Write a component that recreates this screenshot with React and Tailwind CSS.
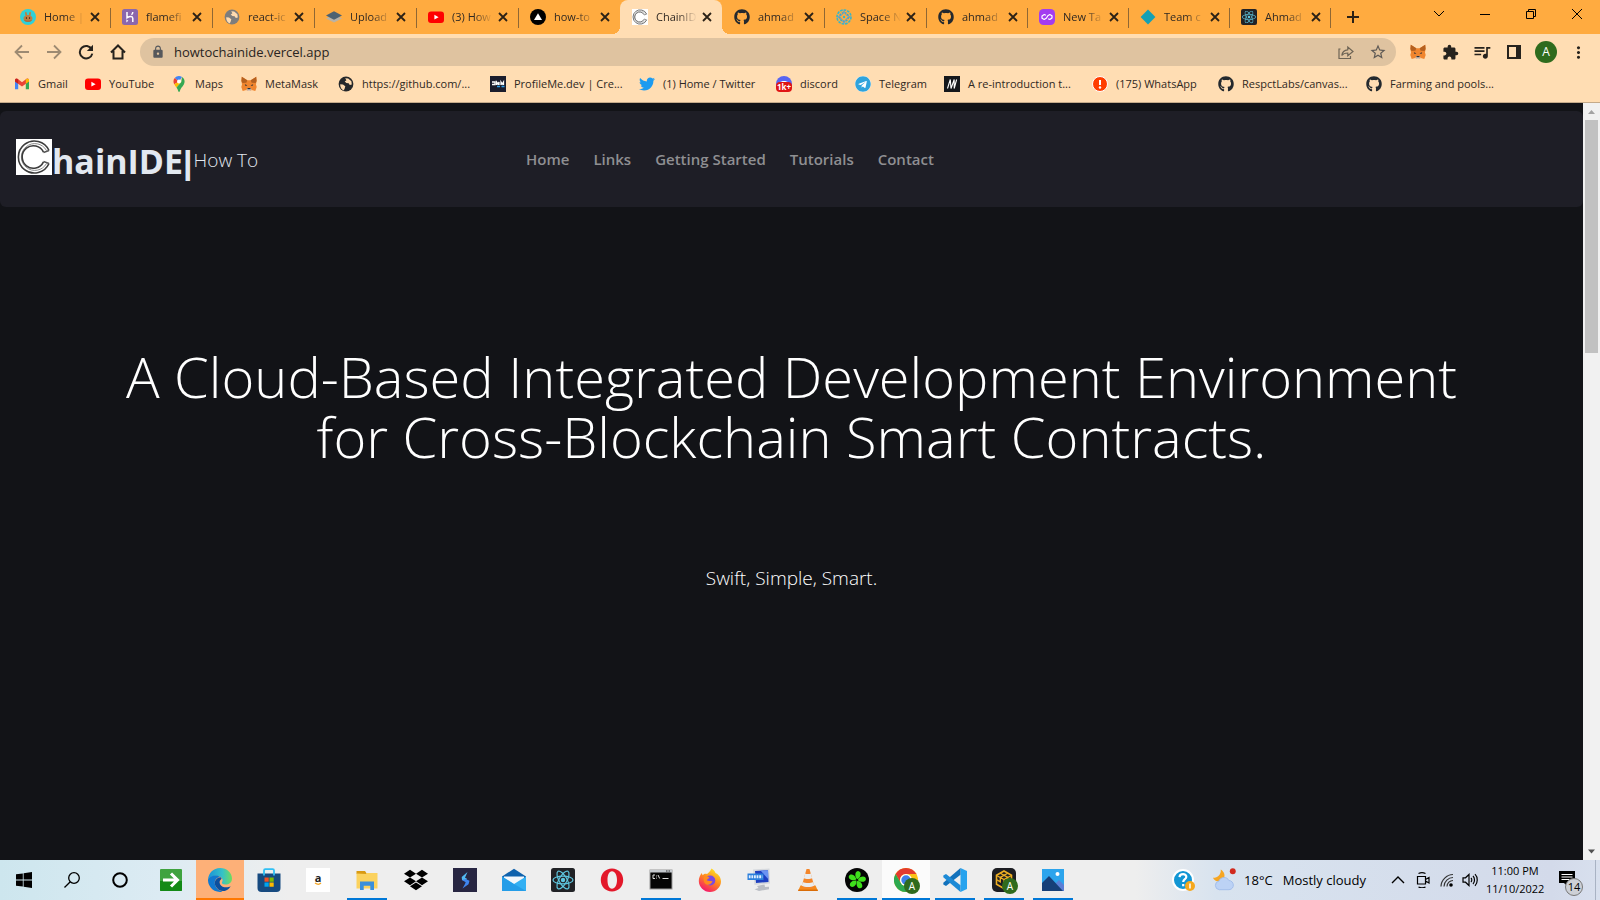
import React from "react";
import { FaGithub, FaTwitter, FaTelegram, FaDropbox, FaReact } from "react-icons/fa";
import { MdExtension, MdQueueMusic, MdLock, MdStarBorder, MdMoreVert } from "react-icons/md";

/* ---------- favicons ---------- */
const Svg = ({ s = 16, v = "0 0 16 16", children, className = "" }) => (
  <svg width={s} height={s} viewBox={v} fill="none" aria-hidden="true" className={"shrink-0 " + className}>
    {children}
  </svg>
);

const Pancake = () => (
  <Svg>
    <circle cx="8" cy="8" r="8" fill="#2fd0d8" />
    <path d="M5.800 2.800c.8 0 1.100 1.600 1.300 3.200h1.800c.2-1.600.5-3.200 1.300-3.200 1 0 .8 2.200.3 3.900 1.200.6 2 1.500 2 2.700 0 2.100-2 3.400-4.500 3.400S3.500 11.500 3.500 9.400c0-1.200.8-2.100 2-2.700-.5-1.700-.7-3.900.3-3.900Z" fill="#c07d42" />
    <path d="M6.400 8.200v1.700M9.600 8.200v1.700" stroke="#4a2b18" />
    <path d="M4.500 11.500c1.400 1 5.600 1 7 0" stroke="#a3683a" />
  </Svg>
);
const Heroku = () => (
  <Svg>
    <rect width="16" height="16" rx="2.500" fill="#8b67ad" />
    <path d="M5 3v5.800c3-1.800 5.800-1.700 5.800.6V13M10.800 3c0 1.200-.5 2-1.300 2.800" stroke="#fff" strokeWidth="1.500" />
    <path d="M4.400 10.200v3.200l1.900-1.600-1.900-1.600Z" fill="#fff" />
  </Svg>
);
const Globe = ({ color = "#7d7d7d" }) => (
  <Svg>
    <circle cx="8" cy="8" r="7.400" fill={color} />
    <path d="M2.200 8.200 5 8.600l2.300 1.600-.6 2.200-1 2.200C3.600 13.500 2 11.200 2.200 8.200ZM7.200 2.200l3 .2 3.200 2.800.4 3.400-2 .5-1.200-1.900-2.200-.2-1.700-1.500 1.700-1.300-1.200-2Z" fill="#ffdbb0" />
  </Svg>
);
const Layers = () => (
  <Svg>
    <path d="M8 5.400 16 9.400 8 13.500 0 9.400Z" fill="#b9b2a6" />
    <path d="M8 2.200 16 6.500 8 10.800 0 6.500Z" fill="#4d6272" />
  </Svg>
);
const YouTube = () => (
  <Svg>
    <rect y="2.500" width="16" height="11.500" rx="3" fill="#f00" />
    <path d="M6.400 5.800v4.800l4.200-2.400Z" fill="#fff" />
  </Svg>
);
const Vercel = () => (
  <Svg>
    <circle cx="8" cy="8" r="8" fill="#000" />
    <path d="M8 4.200 12 11H4Z" fill="#fff" />
  </Svg>
);
const ChainC = ({ s = 16 }) => (
  <Svg s={s} v="0 0 36 36">
    <rect width="36" height="36" fill="#fff" />
    <path d="M33 11.500A16 16 0 1 0 33 24.500" stroke="#3c3c3c" strokeWidth="1.600" />
    <path d="M30.500 11.500A13.400 13.400 0 1 0 30.500 24.500" stroke="#8a8a8a" strokeWidth="1" />
    <path d="M27.500 13.200A11.200 11.200 0 1 0 27.500 22.800" stroke="#3c3c3c" strokeWidth="1.600" />
    <path d="M27.500 13.500 33 11.500M27.500 22.500 33 24.500" stroke="#555" strokeWidth="1.400" />
  </Svg>
);
const GitHub = () => <FaGithub size={16} color="#24292e" aria-hidden="true" className="shrink-0" />;
const Space = () => (
  <Svg>
    <circle cx="8" cy="8" r="7" stroke="#35b7c9" strokeWidth="1.600" strokeDasharray="2.600 1" />
    <circle cx="8" cy="8" r="4.300" stroke="#3aa9c4" strokeWidth="1.600" strokeDasharray="2 .9" />
    <path d="m8 1.500 2 4.500 4.500 2-4.500 2-2 4.500L6 10 1.500 8 6 6Z" stroke="#5a9ed6" strokeWidth=".8" />
    <circle cx="8" cy="8" r="1.200" fill="#35b7c9" />
  </Svg>
);
const Polygon = () => (
  <Svg>
    <rect width="16" height="16" rx="4.500" fill="#a33cf0" />
    <path d="M7 6.200 5.300 5.500 3 7v2.300l2.200 1.200 2.300-1.500 1.300-2.200 2-1.300L13 6.800v2.300l-2.200 1.400-1.700-.8" stroke="#fff" strokeWidth="1.200" strokeLinejoin="round" />
  </Svg>
);
const Diamond = () => (
  <Svg>
    <path d="M8 .6 15.400 8 8 15.400.6 8Z" fill="#15a0b4" />
  </Svg>
);
const ReactIcon = () => (
  <span className="flex size-4 shrink-0 items-center justify-center rounded-xs bg-[#212226]">
    <FaReact size={14} color="#5fc6df" aria-hidden="true" />
  </span>
);
const Gmail = () => (
  <Svg>
    <path d="M1 4v9.300h3.200V7.500Z" fill="#4285f4" />
    <path d="M15 4v9.300h-3.200V7.500Z" fill="#34a853" />
    <path d="M1 4.200c0-1.600 1.700-2.200 2.800-1.300L8 6.200l4.200-3.300c1.100-.9 2.800-.3 2.800 1.300v1.200L8 10.600 1 5.400Z" fill="#ea4335" />
    <path d="M1 4v1.400l3.200 2.400V3.200C2.900 2.200 1 2.700 1 4Z" fill="#c5221f" />
    <path d="M15 4v1.400l-3.200 2.400V3.200C13.100 2.200 15 2.700 15 4Z" fill="#fbbc04" />
  </Svg>
);
const Maps = () => (
  <Svg>
    <path d="M8 0a5.500 5.500 0 0 0-4.300 2L8 5.500 11 1c-.9-.6-1.900-1-3-1Z" fill="#4285f4" />
    <path d="M3.700 2C2 4 2.300 6.400 3.200 8.200L8 5.500Z" fill="#ea4335" />
    <path d="M3.200 8.200c.6 1.200 1.500 2.200 2.300 3.400L10.500 6 8 5.500Z" fill="#fbbc04" />
    <path d="M11 1c3 2 3.100 5 1.800 7.400C11.500 10.800 9.500 12 8.800 15.300c-.2.900-1.300.9-1.500 0-.4-1.500-1-2.600-1.800-3.700L10.300 6Z" fill="#34a853" />
    <circle cx="8" cy="5.400" r="2" fill="#fff" />
  </Svg>
);
const Fox = () => (
  <Svg>
    <path d="M.8.800 6.300 4.200h3.400L15.200.8l.4 4.200-.6 3.400.7 2.500-1.400 4-3.600-1-1.300 1.100H6.600l-1.300-1.100-3.600 1-1.400-4L1 8.400.4 5Z" fill="#f0852e" />
    <path d="M.8.800 6.300 4.200l-.9 2.500L1.400 7 .4 5ZM15.200.8 9.700 4.200l.9 2.500 4 .3 1-2Z" fill="#b5601f" />
    <path d="m3.800 8.200 2.600 1.100-1.800.8ZM12.200 8.200 9.600 9.300l1.800.8Z" fill="#2b3038" />
    <path d="m5.300 13.200 1.500-1.300h2.400l1.500 1.300L9.400 15H6.600Z" fill="#d9c4b4" />
    <path d="M6.600 12h2.800l.3 1.200H6.300Z" fill="#2b3038" />
  </Svg>
);
const ProfileMe = () => (
  <Svg>
    <rect width="16" height="16" fill="#1b1d2c" />
    <path d="M2 6h3v2.500H2M6.500 9V6l1.500 2 1-2v3M11 9V6l1.200 2L13.500 6v3" stroke="#fff" strokeWidth="1.300" />
    <path d="M7 10.500h3M11.500 10.500h3" stroke="#2f9fe8" strokeWidth="1.400" />
  </Svg>
);
const Twitter = () => <FaTwitter size={16} color="#1d9bf0" aria-hidden="true" className="shrink-0" />;
const Discord = () => (
  <span className="relative size-4 shrink-0">
    <Svg>
      <circle cx="8" cy="8" r="8" fill="#5865f2" />
      <path d="M4 6.500c1-2 7-2 8 0Z" fill="#fff" />
    </Svg>
    <span className="absolute inset-x-0 bottom-0 h-[10px] rounded-sm bg-[#e01414] text-center text-[8px] leading-[10px] font-bold text-white">1k+</span>
  </span>
);
const Telegram = () => (
  <span className="flex size-4 shrink-0 items-center rounded-full bg-white">
    <FaTelegram size={16} color="#2fa3dc" aria-hidden="true" />
  </span>
);
const MIcon = () => (
  <Svg>
    <rect width="16" height="16" fill="#15171b" />
    <path d="M3.500 12.500 6.300 3.500 7 12.500 10.200 3.500V12.500M10.200 12.500 12.600 3.500" stroke="#fff" strokeWidth="1.100" />
  </Svg>
);
const Alert = () => (
  <Svg>
    <circle cx="8" cy="8" r="7.500" fill="#ff3d00" stroke="#fff" />
    <path d="M8 4v5" stroke="#fff" strokeWidth="2" />
    <circle cx="8" cy="11.500" r="1.200" fill="#fff" />
  </Svg>
);

/* ---------- tab strip ---------- */
const tabs = [
  { t: "Home |", i: <Pancake /> },
  { t: "flamefi", i: <Heroku /> },
  { t: "react-ic", i: <Globe /> },
  { t: "Upload", i: <Layers /> },
  { t: "(3) How", i: <YouTube /> },
  { t: "how-to", i: <Vercel /> },
  { t: "ChainID", i: <ChainC />, active: true },
  { t: "ahmad", i: <GitHub /> },
  { t: "Space N", i: <Space /> },
  { t: "ahmad", i: <GitHub /> },
  { t: "New Ta", i: <Polygon /> },
  { t: "Team c", i: <Diamond /> },
  { t: "Ahmad", i: <ReactIcon /> },
];

function Tab({ t, i, active, sep, narrow }) {
  return (
    <div className={`relative flex h-[34px] shrink-0 items-center pl-3 ${narrow ? "w-[101px]" : "w-[102px]"} ${active ? "rounded-t-lg bg-[#ffddb3]" : ""}`}>
      {active && (
        <>
          <span className="absolute bottom-0 -left-2 size-2 bg-[radial-gradient(circle_at_0_0,transparent_8px,#ffddb3_8px)]" />
          <span className="absolute -right-2 bottom-0 size-2 bg-[radial-gradient(circle_at_100%_0,transparent_8px,#ffddb3_8px)]" />
        </>
      )}
      {i}
      <span className="ml-2 w-[43px] text-[11px] leading-4 whitespace-nowrap [mask-image:linear-gradient(to_right,#000_50%,transparent_95%)]">{t}</span>
      <button aria-label={"Close " + t} className="flex size-4 items-center justify-center">
        <Svg s={10} v="0 0 10 10">
          <path d="m1 1 8 8M9 1 1 9" stroke="#2b2116" strokeWidth="1.800" />
        </Svg>
      </button>
      {sep && <span className="absolute top-2 -right-px h-5 w-px bg-[#8f6734]" />}
    </div>
  );
}

function WinButton({ label, children }) {
  return (
    <button aria-label={label} className="flex h-7 w-[46px] items-center justify-center">
      <Svg s={12} v="0 0 12 12">{children}</Svg>
    </button>
  );
}

function TabStrip() {
  return (
    <header className="flex bg-[#ffab40] pl-2">
      {tabs.map((tab, n) => (
        <Tab key={n} {...tab} narrow={n > 8} sep={!tab.active && !tabs[n + 1]?.active} />
      ))}
      <button aria-label="New tab" className="ml-[11px] flex w-6 items-center justify-center">
        <Svg s={12} v="0 0 12 12">
          <path d="M6 0v12M0 6h12" stroke="#2b2116" strokeWidth="2" />
        </Svg>
      </button>
      <div className="ml-auto flex">
        <WinButton label="Search tabs"><path d="m1 3 5 5 5-5" stroke="#000" /></WinButton>
        <WinButton label="Minimise"><path d="M1 6.500h10" stroke="#000" /></WinButton>
        <WinButton label="Restore"><path d="M1.500 3.500h7v7h-7ZM3.500 3.500v-2h7v7h-2" stroke="#000" /></WinButton>
        <WinButton label="Close window"><path d="m1 1 10 10M11 1 1 11" stroke="#000" /></WinButton>
      </div>
    </header>
  );
}

/* ---------- toolbar ---------- */
function Tool({ label, children }) {
  return (
    <button type="button" aria-label={label} className="flex h-7 w-8 items-center justify-center text-[#26221d]">
      {children}
    </button>
  );
}

function Toolbar() {
  return (
    <div className="flex bg-[#ffddb3] pt-1 pl-[6px]">
      <Tool label="Back"><Svg><path d="M15 8H2M8 1.500 1.500 8 8 14.500" stroke="#9d8a72" strokeWidth="1.800" /></Svg></Tool>
      <Tool label="Forward"><Svg><path d="M1 8h13M8 1.500 14.500 8 8 14.500" stroke="#9d8a72" strokeWidth="1.800" /></Svg></Tool>
      <Tool label="Reload">
        <Svg><path d="M13.700 5.200A6.300 6.300 0 1 0 14.300 9.600" stroke="currentColor" strokeWidth="2" /><path d="M15 .800v6.200H8.800Z" fill="currentColor" /></Svg>
      </Tool>
      <Tool label="Home page"><Svg><path d="M1 8.500 8 1.500l7 7M3.500 7v7.500h9V7" stroke="currentColor" strokeWidth="2" /></Svg></Tool>
      <form className="ml-[6px] flex h-7 flex-1 items-center rounded-full bg-[#dfc3a0] pr-[2px] pl-[11px]">
        <MdLock size={14} color="#56585c" aria-hidden="true" />
        <input aria-label="Address" defaultValue="howtochainide.vercel.app" className="ml-[9px] min-w-0 flex-1 bg-transparent text-[13px] leading-5 text-[#292421] outline-none" />
        <Tool label="Share">
          <Svg><path d="M2.500 5H1v9.500h11.500V12" stroke="#6e6455" strokeWidth="1.200" /><path d="M3.800 11.500c.5-4 2.500-5.500 6-5.700V3l5.200 4.500-5.200 4.200V9c-3 0-4.700.7-6 2.500Z" stroke="#6e6455" strokeWidth="1.200" /></Svg>
        </Tool>
        <Tool label="Bookmark this page"><MdStarBorder size={18} color="#5f5a55" /></Tool>
      </form>
      <div className="flex px-[6px]">
        <Tool label="MetaMask"><Fox /></Tool>
        <Tool label="Extensions"><MdExtension size={17} /></Tool>
        <Tool label="Media controls"><MdQueueMusic size={20} /></Tool>
        <Tool label="Side panel"><Svg><path d="M2 2h12v12H2Z" stroke="currentColor" strokeWidth="2" /><path d="M10 2h4v12h-4Z" fill="currentColor" /></Svg></Tool>
        <Tool label="Profile"><span className="size-[22px] rounded-full bg-[#2f6b1d] text-[12px] leading-[22px] text-white">A</span></Tool>
        <Tool label="Menu"><MdMoreVert size={19} /></Tool>
      </div>
    </div>
  );
}

const bookmarks = [
  ["Gmail", <Gmail />, "w-[71px]"],
  ["YouTube", <YouTube />, "w-[86px]"],
  ["Maps", <Maps />, "w-[70px]"],
  ["MetaMask", <Fox />, "w-[97px]"],
  ["https://github.com/...", <Globe color="#26282b" />, "w-[152px]"],
  ["ProfileMe.dev | Cre...", <ProfileMe />, "w-[149px]"],
  ["(1) Home / Twitter", <Twitter />, "w-[137px]"],
  ["discord", <Discord />, "w-[79px]"],
  ["Telegram", <Telegram />, "w-[89px]"],
  ["A re-introduction t...", <MIcon />, "w-[148px]"],
  ["(175) WhatsApp", <Alert />, "w-[126px]"],
  ["RespctLabs/canvas...", <GitHub />, "w-[148px]"],
  ["Farming and pools...", <GitHub />, "w-[148px]"],
];

function Bookmarks() {
  return (
    <nav aria-label="Bookmarks" className="flex h-[37px] border-b border-[#c4aa8a] bg-[#ffddb3] pb-[1px] pl-[14px]">
      {bookmarks.map(([t, i, w]) => (
        <a key={t} href="#" className={`flex shrink-0 items-center gap-2 text-[11px] leading-4 whitespace-nowrap text-[#2f2822] ${w}`}>
          {i}
          {t}
        </a>
      ))}
    </nav>
  );
}

/* ---------- page ---------- */
function Page() {
  return (
    <div className="flex flex-1 bg-[#121317]">
      <main className="flex min-w-0 flex-1 flex-col pt-2">
        <div className="flex h-24 items-center rounded-md bg-[#1e1e26] px-4">
          <a href="#" className="flex w-[510px] items-center pt-1 text-[#e2e8f0]">
            <span className="pb-2"><ChainC s={36} /></span>
            <span className="text-[34px] leading-10 font-bold">
              hainIDE<span className="font-['Liberation_Sans']">|</span>
            </span>
            <span className="pb-[2px] pl-[1px] text-[19px] leading-7 font-light">How To</span>
          </a>
          <nav aria-label="Site" className="flex gap-6 text-[15px] leading-6 font-semibold text-[#8f8f92]">
            {["Home", "Links", "Getting Started", "Tutorials", "Contact"].map((l) => (
              <a key={l} href="#">{l}</a>
            ))}
          </nav>
        </div>
        <section className="mx-auto flex max-w-[1400px] flex-col items-center pt-[139px] text-center font-light text-white">
          <h1 className="text-[56px] leading-[60px]">A Cloud-Based Integrated Development Environment for Cross-Blockchain Smart Contracts.</h1>
          <p className="pt-[98px] text-[19px] leading-7">Swift, Simple, Smart.</p>
        </section>
      </main>
      <div aria-hidden="true" className="flex w-[17px] flex-col items-center bg-[#f1f1f1]">
        <Svg s={17} v="0 0 17 17"><path d="M5 11h7L8.500 7Z" fill="#a3a3a3" /></Svg>
        <div className="h-[233px] w-[13px] bg-[#c1c1c1]" />
        <Svg s={17} v="0 0 17 17" className="mt-auto"><path d="M5 6.500h7l-3.500 4Z" fill="#505050" /></Svg>
      </div>
    </div>
  );
}

/* ---------- taskbar ---------- */
const B = ({ children }) => <Svg s={24} v="0 0 24 24">{children}</Svg>;

const GreenArrow = () => (
  <B>
    <rect x="1" y="1" width="22" height="22" rx="1" fill="#3fa33f" />
    <path d="M1 13h22v9a1 1 0 0 1-1 1H2a1 1 0 0 1-1-1Z" fill="#138a16" />
    <path d="M4 12h14M12 5.500l6.500 6.500-6.500 6.500" stroke="#fff" strokeWidth="3" />
  </B>
);
const Edge = () => (
  <B>
    <defs>
      <linearGradient id="eg" x1="0" y1="8" x2="24" y2="8" gradientUnits="userSpaceOnUse"><stop stopColor="#1a93d8" /><stop offset=".6" stopColor="#35c1c8" /><stop offset="1" stopColor="#6fdc5c" /></linearGradient>
    </defs>
    <path d="M0 11.500C.5 5 5.500 0 12 0c7 0 12 5 12 10.500 0 4-3 6-6.500 6-3 0-4-1.200-3.500-2.200.8-1.300.8-3-.2-4.300C11 6.500 3 7.500 0 11.500Z" fill="url(#eg)" />
    <path d="M0 11.500C2 7.500 9 6 12.500 9c-4 0-6.500 3.500-5.500 7.500.8 3.500 3.500 6 7.500 7.200A12 12 0 0 1 0 11.500Z" fill="#1178cf" />
    <path d="M12.500 9.200C8 9.500 5.500 14 7.500 18c2 4 6.500 6.300 10.500 4.500 2-.9 3.700-2.400 4.700-4.300-3 1.800-8.700 1.600-10.500-1.700-1.200-2.200-.5-4 .9-5.200.6-.6.600-1.600-.6-2.100Z" fill="#0c4f9e" />
  </B>
);
const Store = () => (
  <B>
    <path d="M.5 5.500h23V20a4 4 0 0 1-4 4h-15a4 4 0 0 1-4-4Z" fill="#164a80" />
    <path d="M7 7.500v-5c0-.8.5-1.300 1.300-1.300h7.400c.8 0 1.300.5 1.300 1.300v5" stroke="#2fc0f5" strokeWidth="1.800" />
    <path d="M7.500 9.500h4.200v4.200H7.500Z" fill="#f25022" /><path d="M12.500 9.500h4.200v4.200h-4.200Z" fill="#7fba00" />
    <path d="M7.500 14.500h4.200v4.200H7.500Z" fill="#00a4ef" /><path d="M12.500 14.500h4.200v4.200h-4.200Z" fill="#ffb900" />
  </B>
);
const Amazon = () => (
  <span className="relative size-6 bg-white text-center text-[11px] leading-5 font-bold text-[#222]">
    a
    <Svg s={24} v="0 0 24 24" className="absolute inset-0"><path d="M9 15c2 1.500 4.500 1.500 6 0" stroke="#f5a623" strokeWidth="1.200" /></Svg>
  </span>
);
const Explorer = () => (
  <B>
    <path d="M1.500 3h8.500l2 3H1.500Z" fill="#d99a12" />
    <path d="M1.500 5.500 11 6l1-1h10.500v15.500h-21Z" fill="#fbd25e" />
    <path d="M5 22v-8.500h14V22h-3.700v-4.200H8.700V22Z" fill="#3a8fdc" />
  </B>
);
const Bolt = () => (
  <B>
    <rect width="24" height="24" fill="#282642" />
    <path d="m14.500 4-5.800 5 .3 3 3.500 1.200 1.500-2.500-2-.9Z" fill="#52b9f2" />
    <path d="m9 12 3.500-1 4 1.800-1 3.500-6 4.200 2.500-4.500.7-1.800Z" fill="#3f86f0" />
  </B>
);
const Mail = () => (
  <B>
    <path d="M0 8.500 12 .8l12 7.700V13H0Z" fill="#0f62ad" />
    <path d="M2 8.500h20v8H2Z" fill="#f3f7fb" />
    <path d="M0 8.500 12 16l12-7.500V23H0Z" fill="#33b0f3" />
    <path d="m12 16 12 7H0V8.500Z" fill="#1e95e2" opacity=".7" />
  </B>
);
const ReactApp = () => (
  <B>
    <rect width="24" height="24" rx="2.500" fill="#212226" />
    <g stroke="#5fc6df" strokeWidth="1.200">
      <ellipse cx="12" cy="12" rx="10" ry="3.900" />
      <ellipse cx="12" cy="12" rx="10" ry="3.900" transform="rotate(60 12 12)" />
      <ellipse cx="12" cy="12" rx="10" ry="3.900" transform="rotate(120 12 12)" />
    </g>
    <circle cx="12" cy="12" r="2.200" fill="#5fc6df" />
  </B>
);
const Opera = () => (
  <B>
    <path fillRule="evenodd" d="M12 .5c6.500 0 11.200 5 11.200 11.500S18.500 23.500 12 23.500.8 18.500.8 12 5.500.5 12 .5Zm0 2.800C9 3.300 7.500 7 7.500 12s1.500 8.700 4.500 8.700 5-3.700 5-8.700-2-8.700-5-8.700Z" fill="#e3182a" />
  </B>
);
const Cmd = () => (
  <B>
    <rect x="1" y="2" width="22" height="19" fill="#050505" stroke="#9a9a9a" />
    <path d="M1 2h22v2.500H1Z" fill="#c4c9ce" />
    <path d="M17 3h1.500M19.500 3H21" stroke="#333" />
    <path d="M6 7H4v3.500h2M7.500 7.600v.8M7.500 9.700v.8M9 7l1.700 3.500M13.500 10.500h6" stroke="#ddd" />
  </B>
);
const Firefox = () => (
  <B>
    <defs><linearGradient id="ff" x1="18" y1="2" x2="6" y2="23" gradientUnits="userSpaceOnUse"><stop stopColor="#ffe226" /><stop offset=".45" stopColor="#ff8a1e" /><stop offset="1" stopColor="#f5156c" /></linearGradient></defs>
    <path d="M13.500.5c2 1 3.500 3 4 4.500 2.500 1 5.500 4 5.500 8.500C23 19 18 24 12 24S.8 19 .8 13c0-3 1.200-5.800 3-8 .2 1 .5 1.700 1 2.200C6 5.800 7.500 5.500 9 6c1.500-1 3.500-3 4.500-5.500Z" fill="url(#ff)" />
    <circle cx="12.300" cy="12.500" r="5" fill="#7b4be0" />
    <path d="M6 8.500c2.500-.8 5 0 5.500 1.500-1.500.5-2.500 1.200-2.500 2.500 2 .7 3.500.2 5.500 1-1 2.500-3.500 3.800-6 3-2.500-1-3.500-4.500-2.500-8Z" fill="#ff8a1e" />
  </B>
);
const Remote = () => (
  <B>
    <path d="m6 1.500 16.500-1 .5 15-15.500 1.500Z" fill="#d5d8dd" />
    <path d="m8 3 13-.8.500 11.800-12.500 1Z" fill="#1d3fc0" />
    <path d="m13.500 2.600 7.500-.4.400 9Z" fill="#6a93f2" />
    <path d="M.5 5.500h16v6.500H.5Z" fill="#2a7fdc" />
    <path d="M1.800 8.700h13.500" stroke="#e0eeff" strokeWidth="3" strokeDasharray="1.800 .8" />
    <path d="m10 18 7.500-1.500.5 2.500 4-.3v2.500l-10 1.800-4.500-1.800 4-1.200Z" fill="#b9bdc4" />
  </B>
);
const Vlc = () => (
  <B>
    <path d="m4.500 17.500-2.500 5.500h20l-2.500-5.500Z" fill="#f58a1c" />
    <path d="M10.500 1h3l5 18c-2 2-11 2-13 0Z" fill="#f4862a" />
    <path d="m9.200 5.500-1.400 4.700c1.800 1 6.600 1 8.400 0l-1.400-4.700c-1 .8-4.600.8-5.600 0ZM6.800 14l-1 3.700c3 1.800 9.400 1.800 12.400 0l-1-3.700c-2.500 1.400-7.900 1.400-10.400 0Z" fill="#e9ecef" />
    <path d="M2.300 22.300h19.400" stroke="#d96c08" strokeWidth="1.400" />
  </B>
);
const Clover = () => (
  <B>
    <circle cx="12" cy="12" r="12" fill="#050505" />
    {[10, 82, 154, 226, 298].map((a) => (
      <path key={a} d="M12 11.200C8.500 9 8.500 3 12 3s3.500 6 0 8.200Z" fill="#3fe01c" transform={`rotate(${a} 12 12)`} />
    ))}
  </B>
);
const Chrome = () => (
  <B>
    <circle cx="12" cy="12" r="12" fill="#fbc116" />
    <path d="M12 0a12 12 0 0 1 10.400 6H12a6 6 0 0 0-5.200 9L1.600 6A12 12 0 0 1 12 0Z" fill="#e33b2e" />
    <path d="M1.600 6A12 12 0 0 0 12 24l5.200-9a6 6 0 0 1-10.400 0Z" fill="#2da94f" />
    <circle cx="12" cy="12" r="6" fill="#fff" />
    <circle cx="12" cy="12" r="4.700" fill="#3f7fe8" />
  </B>
);
const Code = () => (
  <B>
    <path d="M17.500 0 24 3v18l-6.500 3Z" fill="#27a3ee" />
    <path d="M17.500 6.800 3 18 .3 16.500v-1.700L17.500 0Z" fill="#1272bc" />
    <path d="M17.500 17.200 3 6 .3 7.500v1.700L17.500 24Z" fill="#1d8ad6" />
  </B>
);
const Hive = () => (
  <B>
    <rect width="24" height="24" rx="5" fill="#1c1d22" />
    <path d="m12 3 7.500 4.300v9L12 20.500l-7.500-4.200v-9Z" stroke="#eeae22" strokeWidth="1.600" />
    <path d="m4.500 7.500 7.500 4 7.500-4M12 11.500v9M8.300 5.200l7.500 4.200v4.400l3.500-2M15.700 5.200 8.300 9.400v4.400l-3.600-2" stroke="#eeae22" strokeWidth="1.300" />
  </B>
);
const Photos = () => (
  <B>
    <path d="M1 1h22v22H1Z" fill="#2ca4ec" />
    <path d="m13 17 5-5 5 5v6h-6Z" fill="#5b7fd6" />
    <path d="M1 15 8 8l14 15H1Z" fill="#163f78" />
    <circle cx="16.500" cy="6" r="2" fill="#fff" />
  </B>
);

const apps = [
  { name: "Shortcut", icon: <GreenArrow /> },
  { name: "Edge", icon: <Edge />, state: "edge" },
  { name: "Store", icon: <Store /> },
  { name: "Amazon", icon: <Amazon /> },
  { name: "File Explorer", icon: <Explorer />, state: "open" },
  { name: "Dropbox", icon: <FaDropbox size={24} color="#000" /> },
  { name: "Bolt", icon: <Bolt /> },
  { name: "Mail", icon: <Mail /> },
  { name: "React", icon: <ReactApp /> },
  { name: "Opera", icon: <Opera /> },
  { name: "Command Prompt", icon: <Cmd />, state: "open" },
  { name: "Firefox", icon: <Firefox /> },
  { name: "Remote", icon: <Remote /> },
  { name: "VLC", icon: <Vlc /> },
  { name: "Clover", icon: <Clover />, state: "open" },
  { name: "Chrome", icon: <Chrome />, state: "active", badge: true },
  { name: "Code", icon: <Code />, state: "open" },
  { name: "Hive", icon: <Hive />, state: "open", badge: true },
  { name: "Photos", icon: <Photos />, state: "open" },
];
const appBg = { edge: "bg-[#fdb078]", active: "bg-[#fbfbfb]" };
const appBar = { edge: "inset-x-0 bg-[#ff7800]", active: "inset-x-0 bg-[#0078d7]", open: "inset-x-1 bg-[#0078d7]" };

function Taskbar() {
  return (
    <footer className="flex h-10 bg-linear-[to_right,#cde6ee_0%,#dcebf3_10%,#eeeeee_18%,#eeeeee_71%,#d8e3ef_76%,#d3daea_97%,#d8e0ee_100%] text-black">
      <button aria-label="Start" className="flex w-12 items-center justify-center">
        <Svg><path d="M0 2.300 6.800 1.400v6.100H0ZM7.600 1.300 16 0v7.500H7.600ZM0 8.400h6.800v6.200L0 13.700ZM7.600 8.400H16V16l-8.400-1.300Z" fill="#000" /></Svg>
      </button>
      <button aria-label="Search" className="flex w-12 items-center justify-center">
        <Svg><circle cx="10" cy="6" r="5.300" stroke="#000" strokeWidth="1.300" /><path d="M6.300 9.700.5 15.500" stroke="#000" strokeWidth="1.300" /></Svg>
      </button>
      <button aria-label="Cortana" className="mr-[3px] flex w-12 items-center justify-center">
        <Svg><circle cx="8" cy="8" r="6.800" stroke="#000" strokeWidth="2" /></Svg>
      </button>
      <div className="flex gap-px">
        {apps.map(({ name, icon, state, badge }) => (
          <button key={name} aria-label={name} className={`relative flex w-12 items-center justify-center ${appBg[state] || ""}`}>
            {icon}
            {badge && <span className="absolute top-[18px] left-[22px] size-4 rounded-full bg-[#2f6b1d] text-center text-[10px] leading-4 text-white">A</span>}
            {state && <span className={`absolute bottom-0 h-[2px] ${appBar[state]}`} />}
          </button>
        ))}
      </div>
      <div className="ml-auto flex items-center">
        <Svg s={24} v="0 0 24 24" className="mr-4">
          <circle cx="11" cy="12" r="10" fill="#1296d4" stroke="#fff" strokeWidth="2" />
          <path d="M7.500 9.200c.3-4.200 7-4 6.800-.2-.1 2.300-3 2.200-3.100 5M11.200 16v2.200" stroke="#fff" strokeWidth="2.200" />
          <circle cx="18" cy="18" r="5" fill="#f5a81c" /><path d="M18 15.500v5" stroke="#fff" strokeWidth="1.500" />
        </Svg>
        <button className="flex items-center text-[13px] leading-5 whitespace-nowrap">
          <Svg s={24} v="0 0 26 26">
            <path d="M9.500 1.500c.5 5-3 9-8.500 9 2 5 9.500 5.500 12 .5 1.500-3.500 0-7.500-3.500-9.500Z" fill="#f6a623" />
            <path d="M8 23.500a4.700 4.700 0 0 1-.5-9.300c1.500-5 9-5.200 10.700-.7 6 .2 7 9.300.3 10Z" fill="#bcd2f5" stroke="#9fbcea" />
            <circle cx="22.500" cy="3.500" r="3.200" fill="#d12a1e" />
          </Svg>
          <span className="ml-2">18°C</span>
          <span className="ml-[10px]">Mostly cloudy</span>
        </button>
        <button aria-label="Hidden icons" className="ml-6 w-6"><Svg><path d="m2 11 6-6 6 6" stroke="#000" strokeWidth="1.400" /></Svg></button>
        <button aria-label="Meet now" className="w-6"><Svg><path d="M3.500 4.500h8v7.500h-8ZM11.500 7.500 15 5.500v5.500l-3.500-2M4.500 1.500c2-1 5-1 7 0M4.500 15c2 1 5 1 7 0" stroke="#000" strokeWidth="1.200" /></Svg></button>
        <button aria-label="Network" className="w-6"><Svg><path d="M3 14.500C3 8 9 2.500 15 2.500M6 14.500c0-5 4.500-9 9-9M9 14.500c0-3.500 3-6 6-6" stroke="#333" strokeWidth="1.200" /><circle cx="13" cy="13" r="1.800" fill="#000" /></Svg></button>
        <button aria-label="Volume" className="w-6"><Svg><path d="M1 5.800h2.500L7 2.500v11l-3.500-3.300H1ZM9 6c1 1 1 3 0 4M11 4c2 2 2 6 0 8M13 2.200c3 3 3 8.600 0 11.600" stroke="#000" strokeWidth="1.200" /></Svg></button>
        <time className="w-[58px] text-center text-[11px] leading-[18px] whitespace-nowrap">11:00 PM<br />11/10/2022</time>
        <button aria-label="14 notifications" className="relative ml-[15px] h-10 w-7">
          <Svg className="absolute top-[11px] left-0"><path d="M0 0h16v12H9v4l-4-4H0Z" fill="#000" /><path d="M2.500 3.500h11M2.500 6h11M2.500 8.500h8" stroke="#fff" /></Svg>
          <span className="absolute top-[18px] left-[6px] size-[18px] rounded-full border border-[#777] bg-[#cdd0d6] text-center text-[11px] leading-4">14</span>
        </button>
        <span className="mr-1 ml-2 h-10 w-px bg-[#a9b3c4]" />
      </div>
    </footer>
  );
}

export default function App() {
  return (
    <div className="flex min-h-screen flex-col overflow-hidden font-['Open_Sans','Noto_Sans',sans-serif] text-[#2f2822]">
      <TabStrip />
      <Toolbar />
      <Bookmarks />
      <Page />
      <Taskbar />
    </div>
  );
}
